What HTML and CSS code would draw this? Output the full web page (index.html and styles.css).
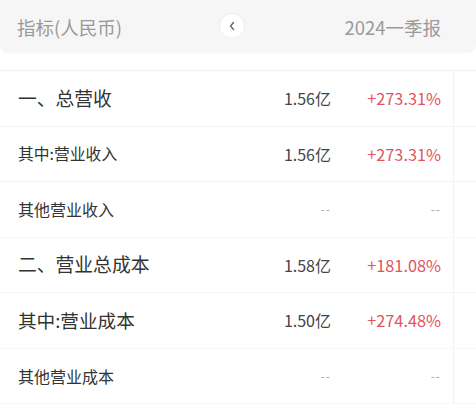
FILE: index.html
```html
<!DOCTYPE html>
<html lang="zh">
<head>
<meta charset="utf-8">
<link rel="stylesheet" href="styles.css">
</head>
<body>
<div class="page">
  <div class="head">
    <div class="head-label">指标(人民币)</div>
    <div class="nav-btn">
      <svg width="8" height="10" viewBox="0 0 8 10"><polyline points="5.5,1.5 2.5,5 5.5,8.5" fill="none" stroke="#666" stroke-width="1.4" stroke-linecap="round" stroke-linejoin="round"/></svg>
    </div>
    <div class="head-period">2024一季报</div>
  </div>
  <div class="table">
    <div class="row major">
      <div class="name n-lg">一、总营收</div>
      <div class="val">1.56亿</div>
      <div class="pct up">+273.31%</div>
      <div class="rest"></div>
    </div>
    <div class="row">
      <div class="name n-md">其中:营业收入</div>
      <div class="val">1.56亿</div>
      <div class="pct up">+273.31%</div>
      <div class="rest"></div>
    </div>
    <div class="row faint">
      <div class="name n-sm">其他营业收入</div>
      <div class="val dash">--</div>
      <div class="pct dash">--</div>
      <div class="rest"></div>
    </div>
    <div class="row major">
      <div class="name n-lg">二、营业总成本</div>
      <div class="val">1.58亿</div>
      <div class="pct up">+181.08%</div>
      <div class="rest"></div>
    </div>
    <div class="row faint">
      <div class="name n-lg2">其中:营业成本</div>
      <div class="val">1.50亿</div>
      <div class="pct up">+274.48%</div>
      <div class="rest"></div>
    </div>
    <div class="row faint">
      <div class="name n-sm">其他营业成本</div>
      <div class="val dash">--</div>
      <div class="pct dash">--</div>
      <div class="rest"></div>
    </div>
  </div>
</div>
</body>
</html>
```
FILE: styles.css
```css
* { box-sizing: border-box; }
html, body { margin: 0; padding: 0; background: #fff; }
body {
  font-family: "Noto Sans CJK SC", "Noto Sans", sans-serif;
  width: 476px;
  height: 406px;
  overflow: hidden;
}
.page { display: flex; flex-direction: column; }
.head {
  height: 52px;
  background: #f6f6f6;
  display: flex;
  align-items: center;
  padding: 3px 35px 0 17px;
  border-bottom-left-radius: 8px;
  border-bottom-right-radius: 8px;
  box-shadow: 0 1px 2px rgba(0,0,0,0.03);
}
.head-label {
  flex: 0 0 202px;
  font-size: 18.5px;
  color: #9a9a9a;
  line-height: 1;
}
.nav-btn {
  width: 26px;
  height: 26px;
  border-radius: 50%;
  background: #fff;
  border: 1px solid #eeeeee;
  display: flex;
  align-items: center;
  justify-content: center;
  margin-top: -4px;
}
.nav-btn svg { display: block; }
.head-period {
  flex: 1;
  text-align: right;
  font-size: 18.5px;
  color: #9a9a9a;
  line-height: 1;
}
.table {
  margin-top: 18px;
  border-top: 1px solid #f1f1f1;
}
.row {
  display: grid;
  grid-template-columns: 1fr 80px 123px 22px;
  align-items: stretch;
  height: 55.5px;
  border-bottom: 1px solid #f3f3f3;
}
.row.faint { border-bottom-color: #f8f8f8; }
.name {
  padding-left: 18px;
  color: #333;
  display: flex;
  align-items: center;
  line-height: 1;
  white-space: nowrap;
}
.n-lg { font-size: 18.8px; }
.n-lg2 { font-size: 18.6px; }
.n-md { font-size: 15.8px; }
.n-sm { font-size: 16px; }
.val, .pct {
  display: flex;
  align-items: center;
  justify-content: flex-end;
  font-size: 16px;
  color: #444;
  line-height: 1;
}
.pct {
  padding-right: 12px;
  border-right: 1px solid #f1f1f1;
  font-size: 16.3px;
}
.up { color: #e2545e; }
.dash { color: #aaa; font-size: 12px; letter-spacing: 1px; }
.pct.dash { padding-right: 12px; }
```
